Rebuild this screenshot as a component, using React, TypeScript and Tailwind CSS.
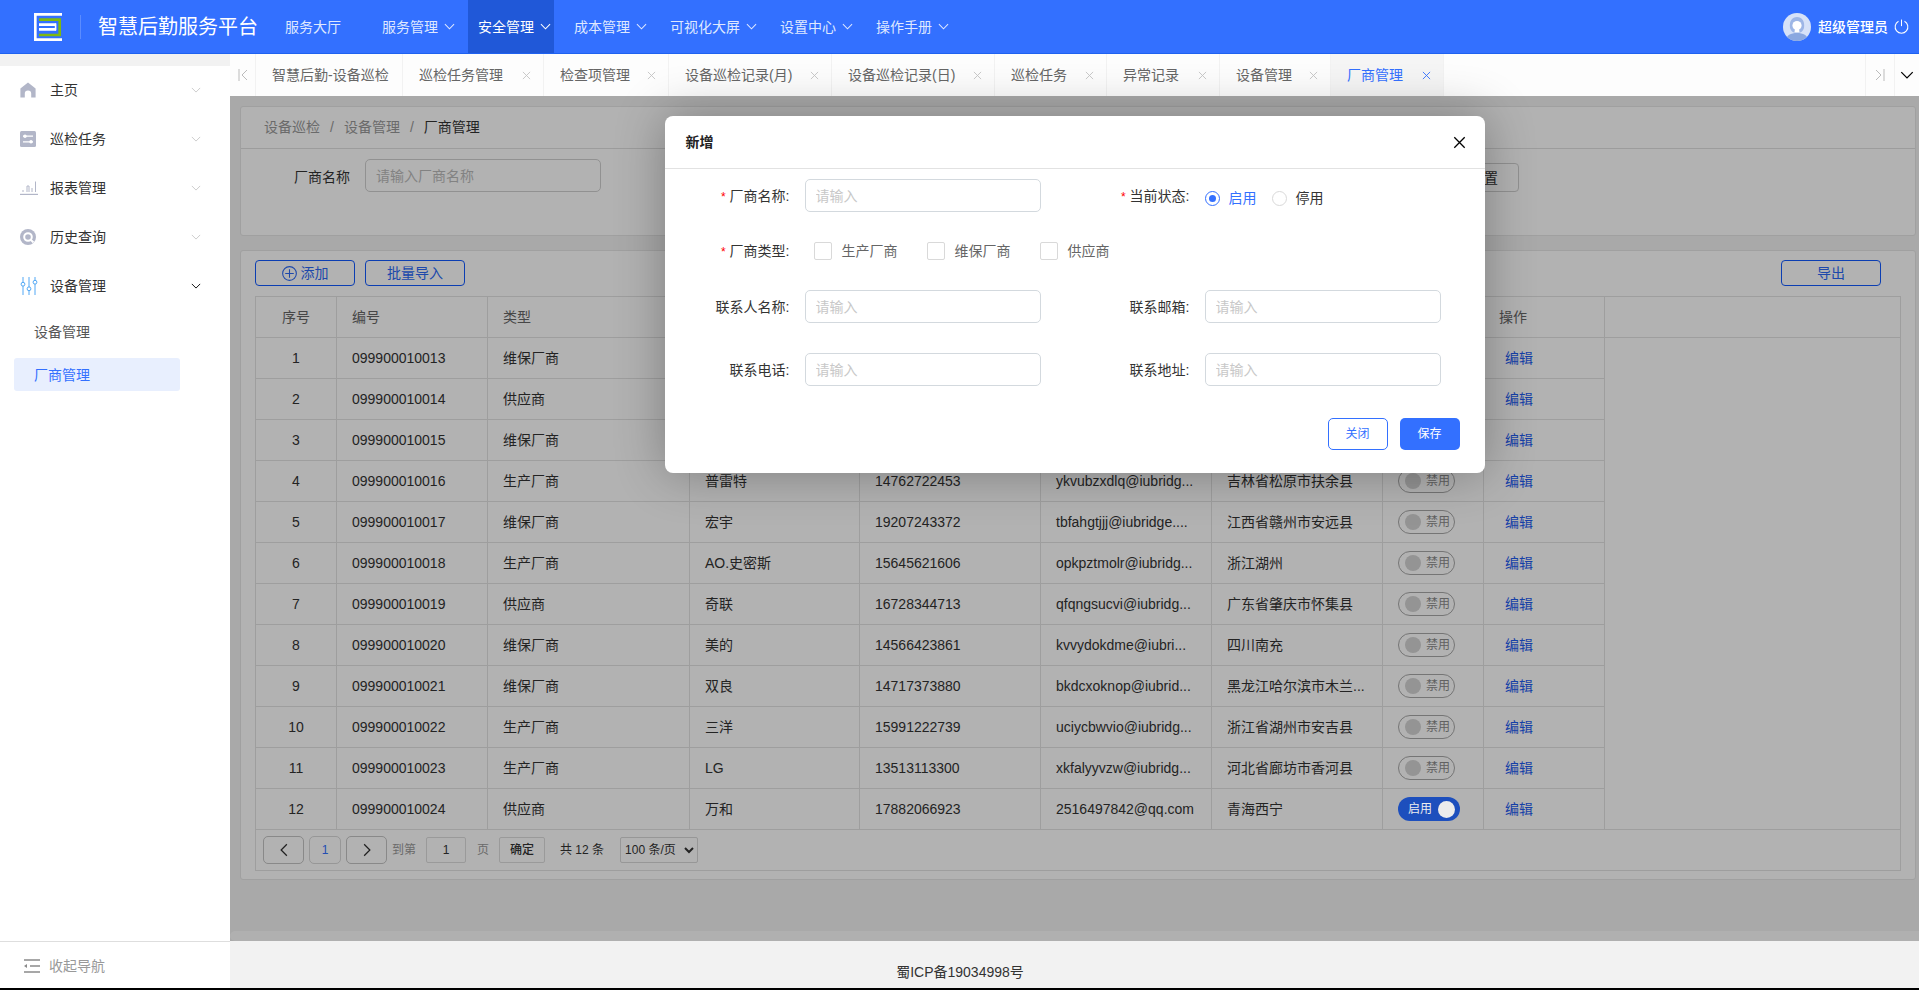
import React from 'react';

const navItems = [
  { label: '服务管理' },
  { label: '安全管理', active: true },
  { label: '成本管理' },
  { label: '可视化大屏', wide: true },
  { label: '设置中心' },
  { label: '操作手册' },
];

const tabs = [
  { label: '智慧后勤-设备巡检', w: 'w-[147px]', fixed: true },
  { label: '巡检任务管理', w: 'w-[141px]' },
  { label: '检查项管理', w: 'w-[125px]' },
  { label: '设备巡检记录(月)', w: 'w-[163px]' },
  { label: '设备巡检记录(日)', w: 'w-[163px]' },
  { label: '巡检任务', w: 'w-[112px]' },
  { label: '异常记录', w: 'w-[113px]' },
  { label: '设备管理', w: 'w-[111px]' },
  { label: '厂商管理', w: 'w-[113px]', active: true },
];

const rows = [
  ['1', '099900010013', '维保厂商', '', '', '', '', false],
  ['2', '099900010014', '供应商', '', '', '', '', false],
  ['3', '099900010015', '维保厂商', '', '', '', '', false],
  ['4', '099900010016', '生产厂商', '普雷特', '14762722453', 'ykvubzxdlq@iubridg...', '吉林省松原市扶余县', false],
  ['5', '099900010017', '维保厂商', '宏宇', '19207243372', 'tbfahgtjjj@iubridge....', '江西省赣州市安远县', false],
  ['6', '099900010018', '生产厂商', 'AO.史密斯', '15645621606', 'opkpztmolr@iubridg...', '浙江湖州', false],
  ['7', '099900010019', '供应商', '奇联', '16728344713', 'qfqngsucvi@iubridg...', '广东省肇庆市怀集县', false],
  ['8', '099900010020', '维保厂商', '美的', '14566423861', 'kvvydokdme@iubri...', '四川南充', false],
  ['9', '099900010021', '维保厂商', '双良', '14717373880', 'bkdcxoknop@iubrid...', '黑龙江哈尔滨市木兰...', false],
  ['10', '099900010022', '生产厂商', '三洋', '15991222739', 'uciycbwvio@iubridg...', '浙江省湖州市安吉县', false],
  ['11', '099900010023', '生产厂商', 'LG', '13513113300', 'xkfalyyvzw@iubridg...', '河北省廊坊市香河县', false],
  ['12', '099900010024', '供应商', '万和', '17882066923', '2516497842@qq.com', '青海西宁', true],
] as const;

const Chevron = ({ className }: { className: string }) => (
  <svg viewBox="0 0 12 7" fill="none" stroke="currentColor" strokeWidth="1.1" className={className}>
    <path d="M1 1l5 5 5-5" />
  </svg>
);

const Cross = ({ className }: { className: string }) => (
  <svg viewBox="0 0 10 10" fill="none" stroke="currentColor" strokeWidth="1" className={className}>
    <path d="M1 1l8 8M9 1L1 9" />
  </svg>
);

const Logo = () => (
  <svg viewBox="0 0 28 28" className="w-[28px] h-[28px] shrink-0">
    <path d="M28 1.3H1.3v25.4H28" fill="none" stroke="#fff" strokeWidth="2.7" />
    <path d="M5 6.6h20.7v15.4H5" fill="none" stroke="#7fb80e" strokeWidth="2.7" />
    <path d="M5 11.6h17M5 16.4h17" fill="none" stroke="#fff" strokeWidth="2.6" />
    <path d="M20.8 10.4h1.6v7h-1.6z" fill="#fff" />
  </svg>
);

const Avatar = () => (
  <svg viewBox="0 0 28 28" className="w-[28px] h-[28px] shrink-0">
    <defs>
      <clipPath id="avatar-clip">
        <circle cx="14" cy="14" r="14" />
      </clipPath>
    </defs>
    <g clipPath="url(#avatar-clip)">
      <rect width="28" height="28" fill="#d6e2f8" />
      <path d="M7 15c-1-7 2-11 7-11s8 4 7 11c-1 3-3 5-7 5s-6-2-7-5z" fill="#9db6e6" />
      <circle cx="14" cy="12.5" r="4.6" fill="#fff" />
      <path d="M12 16h4l.6 3.4h-5.2z" fill="#fff" />
      <path d="M3 28c0-6 5-8 11-8s11 2 11 8z" fill="#8aa8e0" />
    </g>
  </svg>
);

const HomeIcon = () => (
  <svg viewBox="0 0 16 16" className="w-[16px] h-[16px]">
    <path d="M8 0.4l7.6 6v9.2h-4.4v-4a3.2 3.2 0 0 0-6.4 0v4H.4V6.4z" fill="#b2b6c8" />
  </svg>
);

const TaskIcon = () => (
  <svg viewBox="0 0 16 16" className="w-[16px] h-[16px]">
    <rect width="16" height="16" rx="1.5" fill="#b2b6c8" />
    <path d="M3 5.2h10M3 10.8h10" stroke="#fff" strokeWidth="1.2" />
    <circle cx="5" cy="5.2" r="1.7" fill="#fff" />
    <circle cx="11" cy="10.8" r="1.7" fill="#fff" />
  </svg>
);

const ReportIcon = () => (
  <svg viewBox="0 0 18 14" className="w-[18px] h-[14px]" fill="none" stroke="#b2b6c8">
    <path d="M0 13.4h18" strokeWidth="1.2" />
    <path d="M3 11V9M7 11V5h2v6M12 11V7M15.5 11V.5" strokeWidth="1" />
  </svg>
);

const HistoryIcon = () => (
  <svg viewBox="0 0 16 16" className="w-[16px] h-[16px]">
    <circle cx="8" cy="8" r="8" fill="#b2b6c8" />
    <circle cx="8" cy="8" r="3.8" fill="none" stroke="#fff" strokeWidth="2" />
    <path d="M10.5 10.5l3 3" stroke="#fff" strokeWidth="2" />
  </svg>
);

const DeviceIcon = () => (
  <svg viewBox="0 0 18 18" className="w-[18px] h-[18px]" fill="none" stroke="#52a8f5" strokeWidth="1">
    <path d="M3 0v5.5M3 9v9M9 0v10M9 13.5V18M15 0v3.5M15 7v11" />
    <circle cx="3" cy="7.2" r="1.9" />
    <circle cx="9" cy="11.8" r="1.9" />
    <circle cx="15" cy="5.2" r="1.9" />
  </svg>
);

const CollapseIcon = () => (
  <svg viewBox="0 0 16 14" className="w-[16px] h-[14px]" fill="none" stroke="#8a8a8a" strokeWidth="1.4">
    <path d="M0 1h16M6 7h10M0 13h16" />
    <path d="M0 7l3-2v4z" fill="#8a8a8a" stroke="none" />
  </svg>
);

const FieldInput = () => (
  <input
    placeholder="请输入"
    className="w-[236px] h-[33px] px-[10px] text-sm bg-white border border-[#d3d9de] rounded-[5px] outline-none placeholder:text-[#c8c8c8]"
  />
);

const FieldLabel = ({ children, required, w }: { children: string; required?: boolean; w: string }) => (
  <label className={`${w} shrink-0 text-right text-sm text-[#333]`}>
    {required && <span className="text-[#f00] text-xs mr-[4px]">*</span>}
    {children}
  </label>
);

const Check = ({ label }: { label: string }) => (
  <span className="flex items-center gap-[10px] text-sm text-[#666]">
    <span className="w-[18px] h-[18px] border border-[#d9d9d9] rounded-[2px] bg-white" />
    {label}
  </span>
);

// the switched-on toggle stays bright in the reference, so it sits above the mask
const Toggle = ({ on }: { on: boolean }) =>
  on ? (
    <span className="relative z-10 inline-flex items-center justify-between w-[62px] h-[24px] pl-[10px] pr-[5px] rounded-full bg-[#1d4fbd] text-xs text-[#eee] align-middle">
      启用
      <span className="w-[17px] h-[17px] rounded-full bg-[#ececec]" />
    </span>
  ) : (
    <span className="inline-flex items-center gap-[5px] w-[57px] h-[24px] pl-[6px] rounded-full border border-[#a8a8a8] text-xs text-[#8c8c8c] align-middle">
      <span className="w-[16px] h-[16px] rounded-full bg-[#d4d4d4]" />
      禁用
    </span>
  );

const ghostBtn = 'h-[26px] w-[100px] rounded-[4px] border border-[#1259ff] text-sm text-[#2a68f5] flex items-center justify-center gap-[4px]';

export default function App() {
  return (
    <div className="w-[1919px] h-[990px] overflow-hidden flex flex-col border-b-2 border-black bg-white font-['Liberation_Sans','Noto_Sans_CJK_SC',sans-serif]">
      {/* top bar */}
      <header className="h-[54px] shrink-0 bg-[#3370ff] border-b border-[#1f62f0] flex items-center pl-[34px] pr-[10px] text-white">
        <Logo />
        <div className="w-px h-[24px] bg-white/20 ml-[18px]" />
        <div className="ml-[17px] text-[20px] leading-none w-[159px] whitespace-nowrap">智慧后勤服务平台</div>
        <nav className="ml-[18px] flex h-full gap-[10px] text-sm text-[#dfe8ff]">
          <div className="w-[87px] pl-[10px] flex items-center">服务大厅</div>
          {navItems.map((item) => (
            <div
              key={item.label}
              className={`pl-[10px] flex items-center gap-[6px] ${item.wide ? 'w-[100px]' : 'w-[86px]'} ${item.active ? 'bg-[#2058d8] text-white' : ''}`}
            >
              <span className="whitespace-nowrap">{item.label}</span>
              <Chevron className="w-[11px] h-[7px] shrink-0" />
            </div>
          ))}
        </nav>
        <div className="ml-auto flex items-center">
          <Avatar />
          <span className="ml-[7px] text-sm font-medium whitespace-nowrap">超级管理员</span>
          <svg viewBox="0 0 16 16" className="ml-[6px] w-[15px] h-[15px]" fill="none" stroke="#fff" strokeWidth="1.1">
            <path d="M4.8 2.4a6.8 6.8 0 1 0 6.4 0" />
            <path d="M8 .6v7" />
          </svg>
        </div>
      </header>

      <div className="flex-1 min-h-0 flex">
        {/* left menu */}
        <aside className="w-[230px] shrink-0 flex flex-col bg-white">
          <div className="h-[12px] bg-[#f2f2f2]" />
          {[
            { label: '主页', icon: <HomeIcon /> },
            { label: '巡检任务', icon: <TaskIcon /> },
            { label: '报表管理', icon: <ReportIcon /> },
            { label: '历史查询', icon: <HistoryIcon /> },
            { label: '设备管理', icon: <DeviceIcon />, open: true },
          ].map((m) => (
            <div key={m.label} className="h-[49px] pb-[2px] flex items-center text-sm text-[#333]">
              <span className="w-[50px] pl-[20px] flex items-center">{m.icon}</span>
              {m.label}
              <Chevron className={`ml-auto mr-[29px] w-[10px] h-[6px] ${m.open ? 'text-black' : 'text-[#c8c8c8]'}`} />
            </div>
          ))}
          <div className="mt-[4px] h-[33px] pl-[34px] flex items-center text-sm text-[#555]">设备管理</div>
          <div className="mt-[10px] ml-[14px] w-[166px] h-[33px] pl-[20px] flex items-center rounded-[3px] bg-[#e8effe] text-sm text-[#3370ff]">
            厂商管理
          </div>
          <div className="mt-auto h-[47px] border-t border-[#dedede] pl-[24px] pt-[2px] flex items-center gap-[9px] text-sm text-[#999]">
            <CollapseIcon />
            收起导航
          </div>
        </aside>

        <div className="flex-1 min-w-0 flex flex-col bg-[#f2f2f2]">
          {/* tab strip */}
          <div className="h-[42px] shrink-0 flex bg-[#fdfdfd] text-sm text-[#666]">
            <div className="w-[26px] flex items-center justify-center border-r border-[#f2f2f2] text-[#bbb]">
              <svg viewBox="0 0 10 12" className="w-[10px] h-[12px]" fill="none" stroke="currentColor">
                <path d="M1 0v12M9 1L4 6l5 5" />
              </svg>
            </div>
            {tabs.map((t) => (
              <div
                key={t.label}
                className={`${t.w} flex items-center justify-between pl-[16px] pr-[12px] border-r border-[#f2f2f2] ${t.active ? 'bg-[#f5f5f5] text-[#3370ff]' : ''}`}
              >
                <span className="whitespace-nowrap">{t.label}</span>
                {!t.fixed && <Cross className={`w-[9px] h-[9px] ${t.active ? 'text-[#3370ff]' : 'text-[#c4c4c4]'}`} />}
              </div>
            ))}
            <div className="ml-auto w-[30px] flex items-center justify-center border-x border-[#f2f2f2] text-[#bbb]">
              <svg viewBox="0 0 10 12" className="w-[10px] h-[12px]" fill="none" stroke="currentColor">
                <path d="M9 0v12M1 1l5 5-5 5" />
              </svg>
            </div>
            <div className="w-[24px] flex items-center justify-center">
              <Chevron className="w-[14px] h-[8px] text-black" />
            </div>
          </div>

          <div className="relative flex-1 min-h-0 flex flex-col">
            <main className="flex-1 min-h-0 pt-[10px] pl-[10px] pr-[3px] flex flex-col gap-[14px]">
              <section className="h-[130px] shrink-0 bg-white border border-[#e5e5e5] rounded-[3px]">
                <div className="h-[42px] pb-[2px] border-b border-[#e0e0e0] pl-[23px] flex items-center text-sm text-[#999]">
                  设备巡检<span className="mx-[10px]">/</span>设备管理<span className="mx-[10px]">/</span>
                  <span className="text-[#333]">厂商管理</span>
                </div>
                <div className="flex items-start pl-[53px] pt-[10px] pr-[396px]">
                  <span className="mt-[8px] text-sm text-[#333]">厂商名称</span>
                  <input
                    placeholder="请输入厂商名称"
                    className="ml-[15px] w-[236px] h-[33px] px-[10px] text-sm border border-[#d0d0d0] rounded-[5px] outline-none placeholder:text-[#bbb]"
                  />
                  <button className="ml-auto mt-[4px] w-[70px] h-[29px] border border-[#d0d0d0] rounded-[4px] text-sm text-[#333]">重置</button>
                </div>
              </section>

              <section className="h-[630px] shrink-0 bg-white border border-[#e5e5e5] rounded-[3px] px-[14px] pt-[9px]">
                <div className="flex items-center gap-[10px]">
                  <button className={ghostBtn}>
                    <svg viewBox="0 0 14 14" className="w-[15px] h-[15px]" fill="none" stroke="currentColor" strokeWidth="1">
                      <circle cx="7" cy="7" r="6.4" />
                      <path d="M7 3v8M3 7h8" />
                    </svg>
                    添加
                  </button>
                  <button className={ghostBtn}>批量导入</button>
                  <button className={`${ghostBtn} ml-auto mr-[20px]`}>导出</button>
                </div>

                <div className="mt-[10px] w-[1646px] border-b border-[#e2e2e2]">
                  <table className="w-full table-fixed border-collapse text-sm text-[#333]">
                    <colgroup>
                      <col className="w-[81px]" />
                      <col className="w-[151px]" />
                      <col className="w-[202px]" />
                      <col className="w-[170px]" />
                      <col className="w-[181px]" />
                      <col className="w-[171px]" />
                      <col className="w-[171px]" />
                      <col className="w-[101px]" />
                      <col className="w-[121px]" />
                      <col />
                    </colgroup>
                    <thead>
                      <tr className="h-[41px] text-[#666]">
                        {['序号', '编号', '类型', '厂商名称', '联系电话', '联系邮箱', '联系地址', '状态', '操作', ''].map((h, i) => (
                          <th key={i} className={`border border-[#e2e2e2] font-normal ${i === 0 ? 'text-center' : 'text-left pl-[15px]'}`}>
                            {h}
                          </th>
                        ))}
                      </tr>
                    </thead>
                    <tbody>
                      {rows.map((r, i) => (
                        <tr key={r[0]} className="h-[41px]">
                          <td className="border border-[#e2e2e2] text-center">{r[0]}</td>
                          {[r[1], r[2], r[3], r[4], r[5], r[6]].map((c, j) => (
                            <td key={j} className="border border-[#e2e2e2] pl-[15px] pr-[5px] truncate">{c}</td>
                          ))}
                          <td className="border border-[#e2e2e2] pl-[15px]"><Toggle on={r[7]} /></td>
                          <td className="border border-[#e2e2e2] pl-[21px] text-[#1f5cf0]">编辑</td>
                          {i === 0 && <td rowSpan={12} className="border border-[#e2e2e2]" />}
                        </tr>
                      ))}
                    </tbody>
                  </table>
                  <div className="h-[40px] border-x border-[#e2e2e2] pl-[7px] flex items-center text-xs text-[#999]">
                    <button className="w-[41px] h-[28px] rounded-[5px] border border-[#c4c4c4] flex items-center justify-center text-[#333]">
                      <Chevron className="w-[14px] h-[8px] rotate-90" />
                    </button>
                    <button className="ml-[5px] w-[32px] h-[28px] rounded-[5px] border border-[#d8d8d8] text-[#3370ff]">1</button>
                    <button className="ml-[5px] w-[41px] h-[28px] rounded-[5px] border border-[#c4c4c4] flex items-center justify-center text-[#333]">
                      <Chevron className="w-[14px] h-[8px] -rotate-90" />
                    </button>
                    <span className="ml-[5px]">到第</span>
                    <input defaultValue="1" className="ml-[10px] w-[40px] h-[26px] text-center text-[#333] border border-[#ddd] rounded-[2px] outline-none" />
                    <span className="ml-[11px]">页</span>
                    <button className="ml-[10px] w-[46px] h-[26px] border border-[#ddd] rounded-[2px] font-medium text-[#333]">确定</button>
                    <span className="ml-[15px] text-[#333] whitespace-nowrap">共 12 条</span>
                    <select defaultValue="100" className="ml-[16px] w-[78px] h-[26px] border border-[#d8d8d8] rounded-[2px] text-xs text-[#333] outline-none">
                      <option value="100">100 条/页</option>
                    </select>
                  </div>
                </div>
              </section>
            </main>

            <div className="h-[10px] shrink-0 bg-[#fcfcfc] rounded-l-[5px]" />

            {/* modal mask */}
            <div className="absolute inset-0 bg-black/30 flex justify-center items-start pt-[20px]">
              <div className="relative z-20 w-[820px] h-[357px] bg-white rounded-[8px] shadow-[0_0_50px_rgba(0,0,0,0.3)] flex flex-col">
                <div className="h-[53px] shrink-0 border-b border-[#e2e2e2] pl-[21px] pr-[19px] flex items-center justify-between">
                  <span className="text-sm font-bold text-[#222]">新增</span>
                  <Cross className="w-[13px] h-[13px] text-black" />
                </div>
                <div className="flex items-center mt-[10px] h-[33px]">
                  <FieldLabel required w="w-[125px]">厂商名称:</FieldLabel>
                  <span className="ml-[15px]"><FieldInput /></span>
                  <FieldLabel required w="w-[149px]">当前状态:</FieldLabel>
                  <span className="ml-[15px] mt-[5px] flex items-center text-sm">
                    <span className="w-[15px] h-[15px] rounded-full border border-[#3370ff] flex items-center justify-center">
                      <span className="w-[7px] h-[7px] rounded-full bg-[#3370ff]" />
                    </span>
                    <span className="ml-[9px] text-[#3370ff]">启用</span>
                    <span className="ml-[15px] w-[15px] h-[15px] rounded-full border border-[#d9d9d9]" />
                    <span className="ml-[9px] text-[#333]">停用</span>
                  </span>
                </div>
                <div className="flex items-center mt-[30px] h-[18px]">
                  <FieldLabel required w="w-[125px]">厂商类型:</FieldLabel>
                  <div className="ml-[24px] flex items-center gap-[29px]">
                    <Check label="生产厂商" />
                    <Check label="维保厂商" />
                    <Check label="供应商" />
                  </div>
                </div>
                <div className="flex items-center mt-[30px] h-[33px]">
                  <FieldLabel w="w-[125px]">联系人名称:</FieldLabel>
                  <span className="ml-[15px]"><FieldInput /></span>
                  <FieldLabel w="w-[149px]">联系邮箱:</FieldLabel>
                  <span className="ml-[15px]"><FieldInput /></span>
                </div>
                <div className="flex items-center mt-[30px] h-[33px]">
                  <FieldLabel w="w-[125px]">联系电话:</FieldLabel>
                  <span className="ml-[15px]"><FieldInput /></span>
                  <FieldLabel w="w-[149px]">联系地址:</FieldLabel>
                  <span className="ml-[15px]"><FieldInput /></span>
                </div>
                <div className="flex justify-end gap-[12px] mt-[32px] pr-[25px]">
                  <button className="w-[60px] h-[32px] rounded-[5px] border border-[#3370ff] bg-white text-xs text-[#3370ff]">关闭</button>
                  <button className="w-[60px] h-[32px] rounded-[5px] bg-[#3370ff] text-xs text-white">保存</button>
                </div>
              </div>
            </div>
          </div>

          <footer className="h-[47px] shrink-0 pr-[229px] flex items-end justify-center pb-[6px] text-sm text-[#333]">
            蜀ICP备19034998号
          </footer>
        </div>
      </div>
    </div>
  );
}
